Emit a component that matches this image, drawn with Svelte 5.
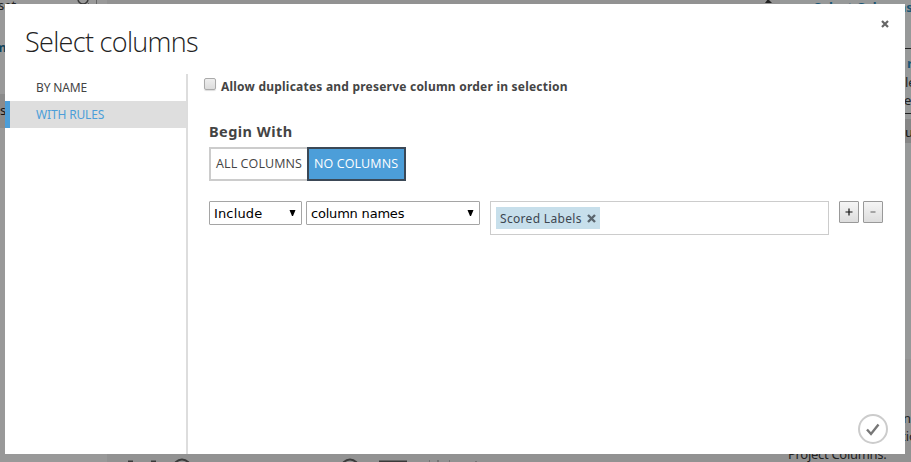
<script>
  let tab = $state('WITH RULES');
  let begin = $state('NO COLUMNS');
  const tabs = ['BY NAME', 'WITH RULES'];
  const fragments = [
    { t: 'set', x: -2, y: -4, c: '#222' },
    { t: 'm', x: -6, y: 38, c: '#12445c', b: true },
    { t: 's', x: 0, y: 101, c: '#111' },
    { t: 'Select Columns', x: 814, y: -2, c: '#1b5674', b: true },
    { t: 'r', x: 907, y: 54, c: '#1b5674', b: true },
    { t: 'le', x: 905, y: 73, c: '#222' },
    { t: 'e', x: 904, y: 91, c: '#222' },
    { t: 'u', x: 905, y: 123, c: '#111' },
    { t: 'n', x: 903, y: 409, c: '#222' },
    { t: 'tio', x: 901, y: 427, c: '#222' },
    { t: 'Project Columns.', x: 788, y: 445, c: '#222', s: -0.3 }
  ];
</script>

<div class="screen">
  <div class="workspace" aria-hidden="true">
    <div class="left-pane"></div>
    <div class="left-row"></div>
    <div class="right-pane"></div>
    <div class="right-row"></div>
    {#each fragments as f}
      <span class="frag" class:bold={f.b} style="left:{f.x}px;top:{f.y}px;color:{f.c};letter-spacing:{f.s ?? 0}px">{f.t}</span>
    {/each}
    <svg class="shapes" width="911" height="462" fill="none" stroke="#3b3b3b">
      <circle cx="83" cy="-1" r="5" stroke-width="1.5" />
      <path d="M87 2l3 3M96.500 0v4" stroke="#666" />
      <path d="M765 3l3-4 4 4z" fill="#222" stroke="none" />
      <path d="M905 48.500h6M905 113.500h6" stroke="#222" />
      <path d="M128 461.500h5M151 461.500h5" stroke-width="2" />
      <circle cx="182" cy="468" r="8.500" stroke-width="2" />
      <circle cx="350" cy="468" r="8.500" stroke-width="2" />
      <path d="M379 462h28" stroke-width="3" />
      <path d="M429 461h1M438 460v2M449 461h1M476 461v1" stroke="#555" />
    </svg>
  </div>

  <section class="dialog">
    <header>
      <h1>Select columns</h1>
      <button class="close" aria-label="Close">
        <svg width="8" height="8" viewBox="0 0 8 8"><path d="M1 1l6 6M7 1l-6 6" stroke="#666" stroke-width="2.200" /></svg>
      </button>
    </header>
    <div class="body">
      <nav>
        {#each tabs as t}
          <button class="tab" class:active={tab === t} onclick={() => (tab = t)}><span>{t}</span></button>
        {/each}
      </nav>
      <main>
        <label class="dup"><span class="box"></span><b>Allow duplicates and preserve column order in selection</b></label>
        <h2>Begin With</h2>
        <div class="toggle">
          <button class="all" class:on={begin === 'ALL COLUMNS'} onclick={() => (begin = 'ALL COLUMNS')}><span>ALL COLUMNS</span></button>
          <button class="none" class:on={begin === 'NO COLUMNS'} onclick={() => (begin = 'NO COLUMNS')}><span>NO COLUMNS</span></button>
        </div>
        <div class="rule">
          <div class="select inc"><span>Include</span><svg width="7" height="6"><path d="M0.500 0h6L4 6H3z" /></svg></div>
          <div class="select kind"><span>column names</span><svg width="7" height="6"><path d="M0.500 0h6L4 6H3z" /></svg></div>
          <div class="values">
            <span class="chip"><span class="chip-text">Scored Labels</span><svg width="9" height="9" viewBox="0 0 9 9"><path d="M1 1l7 7M8 1l-7 7" stroke="#5b666e" stroke-width="2.400" /></svg></span>
          </div>
          <button class="step" aria-label="Add"><svg width="8" height="8"><path d="M0.500 4h7M4 0.500v7" stroke="#111" stroke-width="1.200" /></svg></button>
          <button class="step minus" aria-label="Remove"><svg width="8" height="8"><path d="M1.500 4h5" stroke="#777" stroke-width="1.200" /></svg></button>
        </div>
      </main>
    </div>
    <button class="ok" aria-label="OK">
      <svg width="30" height="30" fill="none"><circle cx="15" cy="15" r="14" stroke="#ccc" stroke-width="2" /><path d="M9 15.500l4 4.500 7.500-9.500" stroke="#777" stroke-width="2.400" /></svg>
    </button>
  </section>
</div>

<style>
  .screen {
    position: relative;
    width: 911px;
    height: 462px;
    overflow: hidden;
    background: #929292;
    font: 13px/18px 'Noto Sans', 'Open Sans', sans-serif;
    color: #444;
    white-space: nowrap;
  }
  button { margin: 0; padding: 0; border: 0; background: none; font: inherit; color: inherit; }
  svg { display: block; flex: none; }
  .workspace, .shapes { position: absolute; inset: 0; }
  .left-pane { position: absolute; left: 0; top: 0; width: 107px; height: 462px; background: #999; }
  .left-row { position: absolute; left: 0; top: 94px; width: 107px; height: 34px; background: #8b8b8b; }
  .right-pane { position: absolute; left: 780px; top: 0; width: 131px; height: 359px; background: #979999; }
  .right-row { position: absolute; left: 780px; top: 119px; width: 131px; height: 24px; background: #868686; }
  .frag { position: absolute; }
  .bold { font-weight: 700; }
  .dialog {
    position: absolute;
    left: 5px;
    top: 4px;
    width: 900px;
    height: 450px;
    background: #fff;
    display: flex;
    flex-direction: column;
  }
  header { height: 70px; display: flex; justify-content: space-between; padding: 0 16px 0 20px; box-sizing: border-box; }
  h1 { margin: 18px 0 0; font: 300 27px/40px 'Open Sans', 'Noto Sans', sans-serif; letter-spacing: -0.68px; color: #222; }
  .close { width: 8px; height: 8px; margin-top: 16px; }
  .body { flex: 1; display: flex; }
  nav { width: 181px; border-right: 2px solid #ddd; }
  .tab { display: flex; align-items: center; width: 181px; height: 27px; padding-left: 31px; box-sizing: border-box; font-size: 12px; letter-spacing: -0.15px; color: #444; }
  .tab.active { background: #dedede; border-left: 5px solid #4c9ed9; padding-left: 26px; color: #4c9ed9; }
  main { flex: 1; padding: 0 21px 0 17px; }
  .dup { display: flex; align-items: flex-start; height: 44px; font-size: 12px; letter-spacing: 0.22px; }
  .dup b { margin: 4px 0 0 5px; }
  .box { width: 12px; height: 12px; box-sizing: border-box; border: 1px solid #aaa; border-radius: 2px; background: linear-gradient(#eee, #dcdcdc); margin: 4px 0 0 -1px; box-shadow: 0 1px 1px #ddd; }
  h2 { margin: 4px 0 6px 4px; height: 19px; font: 700 14.500px/19px 'Noto Sans', sans-serif; letter-spacing: 0.45px; }
  .toggle { display: flex; height: 34px; margin-left: 4px; }
  .toggle button { height: 34px; box-sizing: border-box; border: 2px solid #ccc; font: 12.500px/18px 'Open Sans', 'Noto Sans', sans-serif; letter-spacing: 0.1px; text-align: left; padding-left: 5px; }
  .toggle .all { width: 98px; border-right: 0; }
  .none { width: 99px; }
  .toggle .on { background: #4c9ed9; border: 2px solid #3b4856; color: #fff; }
  .rule { display: flex; align-items: flex-start; margin: 20px 0 0 4px; }
  .select { display: flex; align-items: center; justify-content: space-between; height: 24px; box-sizing: border-box; border: 1px solid #a5a5a5; border-radius: 1px; padding: 1px 5px 0 4px; color: #000; font: 13px/18px 'DejaVu Sans', sans-serif; }
  .select svg { margin-bottom: 2px; }
  .inc { width: 93px; letter-spacing: 0.15px; }
  .kind { width: 174px; margin-left: 4px; letter-spacing: -0.2px; }
  .values { width: 339px; height: 34px; box-sizing: border-box; border: 1px solid #ccc; margin-left: 10px; padding: 5px; }
  .chip { display: flex; align-items: center; width: 104px; height: 22px; box-sizing: border-box; background: #c7dfeb; color: #3c4650; padding: 0 4px; justify-content: space-between; font-size: 12px; letter-spacing: 0.32px; }
  .chip-text { padding-top: 1px; }
  .step { display: flex; align-items: center; justify-content: center; width: 20px; height: 22px; box-sizing: border-box; border: 1px solid #999; border-radius: 1px; background: linear-gradient(#f5f5f5, #ddd); margin-left: 10px; }
  .step.minus { margin-left: 4px; }
  .ok { position: absolute; right: 17px; bottom: 10px; width: 30px; height: 30px; }
</style>
